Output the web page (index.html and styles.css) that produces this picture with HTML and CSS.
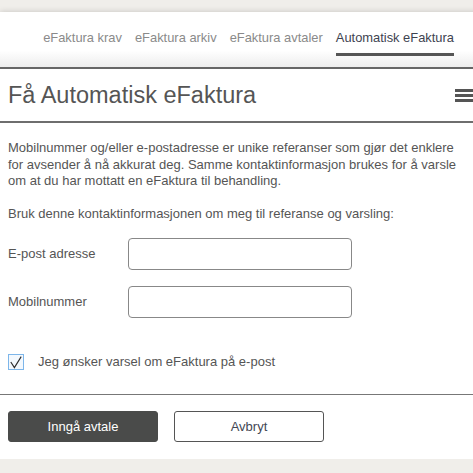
FILE: index.html
```html
<!DOCTYPE html>
<html lang="no">
<head>
    <meta charset="UTF-8">
    <meta name="viewport" content="width=device-width, initial-scale=1.0">
    <title>Automatisk eFaktura</title>
    <link rel="stylesheet" href="styles.css">
</head>
<body>
    <div class="card">
        <!-- Faner -->
        <nav class="tabs">
            <a href="#krav">eFaktura krav</a>
            <a href="#arkiv">eFaktura arkiv</a>
            <a href="#avtaler">eFaktura avtaler</a>
            <a href="#automatisk" class="active">Automatisk eFaktura</a>
        </nav>

        <div class="panel-head">
            <h1>Få Automatisk eFaktura</h1>
            <span class="menu"><i></i><i></i><i></i></span>
        </div>

        <form class="panel" onsubmit="return false">
            <div class="panel-body">
                <p>Mobilnummer og/eller e-postadresse er unike referanser som gjør det enklere for avsender å nå akkurat deg. Samme kontaktinformasjon brukes for å varsle om at du har mottatt en eFaktura til behandling.</p>
                <p>Bruk denne kontaktinformasjonen om meg til referanse og varsling:</p>

                <div class="field">
                    <label for="epost">E-post adresse</label>
                    <input type="text" id="epost">
                </div>
                <div class="field">
                    <label for="mobil">Mobilnummer</label>
                    <input type="text" id="mobil">
                </div>

                <label class="check">
                    <span class="box">
                        <svg width="16" height="16" viewBox="0 0 16 16"><polyline points="2.8,8 6.4,13.6 13.2,2.6" fill="none" stroke="#2b2b2b" stroke-width="1.1"/></svg>
                    </span>
                    Jeg ønsker varsel om eFaktura på e-post
                </label>
            </div>

            <div class="actions">
                <button type="submit" class="btn btn-primary">Inngå avtale</button>
                <button type="button" class="btn">Avbryt</button>
            </div>
        </form>
    </div>
</body>
</html>
```

FILE: styles.css
```css
body {
    font-family: "Liberation Sans", Arial, sans-serif;
    background-color: #f0eeea;
    color: #555;
    margin: 0;
    padding: 12px 0 0;
    overflow: hidden;
}
.card {
    width: calc(100% + 8px);
    background: #fff;
    box-shadow: 0 0 6px rgba(0, 0, 0, 0.18);
}
.tabs {
    display: flex;
    justify-content: flex-end;
    gap: 13px;
    padding: 18px 27px 11px 0;
    background: linear-gradient(#fff 70%, #ededed);
    border-bottom: 2px solid #666;
}
.tabs a {
    color: #8a8a8a;
    text-decoration: none;
    font-size: 12.9px;
    line-height: 16px;
    padding-bottom: 7px;
    border-bottom: 3px solid transparent;
}
.tabs a.active {
    color: #3e4350;
    border-bottom-color: #555;
}
.panel-head {
    display: flex;
    justify-content: space-between;
    align-items: center;
    padding: 12px 4px 12px 8px;
    border-bottom: 2px solid #6e6e6e;
}
.panel-head h1 {
    margin: 0;
    font-size: 23.5px;
    line-height: 28px;
    font-weight: normal;
    color: #555;
}
.menu {
    display: flex;
    flex-direction: column;
    gap: 2px;
    width: 22px;
    margin-top: 1px;
}
.menu i {
    display: block;
    height: 3px;
    background: #555;
}
.panel-body {
    padding: 17px 16px 0 8px;
    font-size: 13px;
    line-height: 16.5px;
}
.panel-body p {
    margin: 0 0 16px;
}
.field {
    display: flex;
    align-items: center;
    margin-top: 16px;
}
.panel-body p + .field {
    margin-top: 13px;
}
.field label {
    width: 120px;
}
.field input {
    width: 224px;
    height: 32px;
    box-sizing: border-box;
    border: 1px solid #888;
    border-radius: 4px;
    padding: 0 8px;
    font: inherit;
}
.check {
    display: flex;
    align-items: center;
    gap: 14px;
    margin: 36px 0 23px;
}
.check .box {
    width: 16px;
    height: 16px;
    box-sizing: border-box;
    border: 1px solid #7db6ea;
    background: #f3f8fd;
    display: flex;
}
.check .box svg {
    margin: -1px;
}
.actions {
    display: flex;
    gap: 16px;
    border-top: 1px solid #777;
    padding: 16px 8px 17px;
}
.btn {
    width: 150px;
    height: 31px;
    font-family: inherit;
    font-size: 13px;
    color: #434754;
    background: #fff;
    border: 1px solid #555;
    border-radius: 3px;
    cursor: pointer;
}
.btn-primary {
    color: #fff;
    background: #4a4b4a;
    border-color: #4a4b4a;
}
```
